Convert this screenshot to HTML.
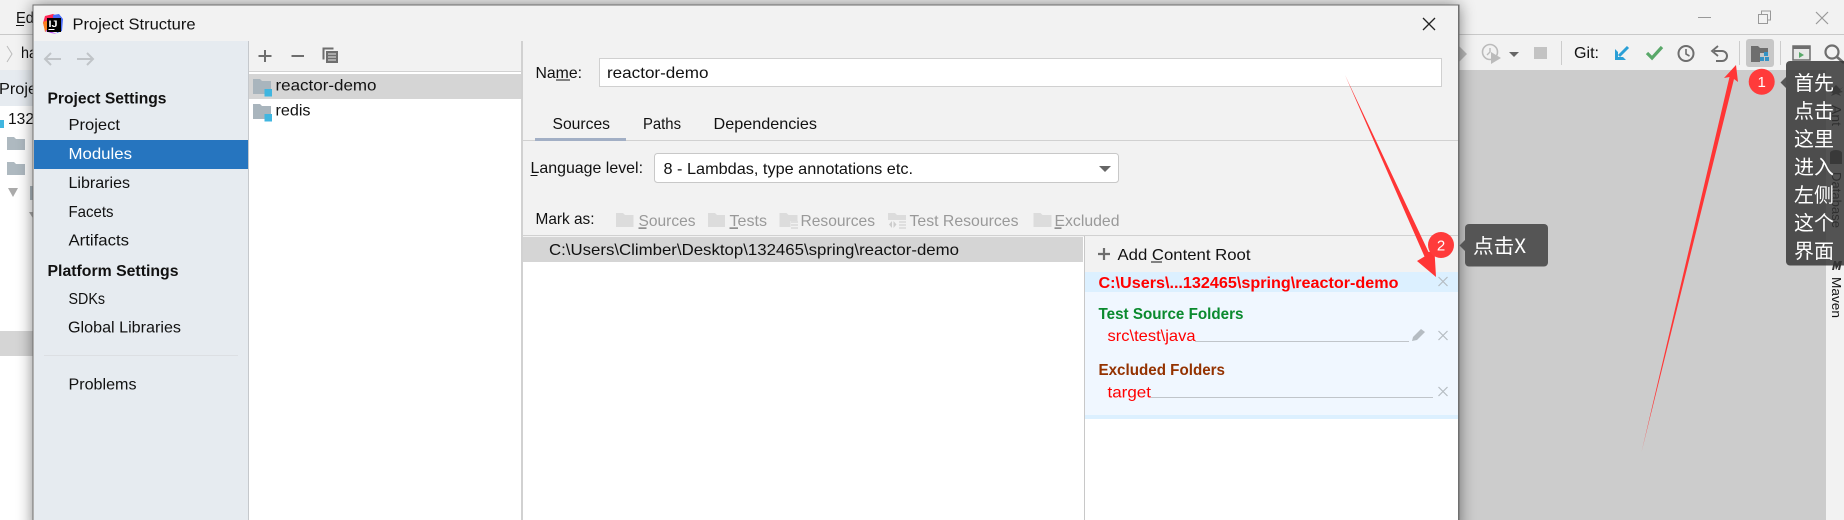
<!DOCTYPE html>
<html><head><meta charset="utf-8"><title>Project Structure</title>
<style>
html,body{margin:0;padding:0;width:1844px;height:520px;overflow:hidden;background:#ccc}
svg{display:block;position:absolute;left:0;top:0}
text{font-family:"Liberation Sans","Noto Sans CJK SC",sans-serif;font-size:16px;fill:#111}
.b{font-weight:bold;font-size:15.5px}
.g{fill:#999}
.r{fill:#f00}
.c{font-family:"Noto Sans CJK SC","Liberation Sans",sans-serif;font-size:20px;fill:#fff}
</style></head><body>
<svg width="1844" height="520" viewBox="0 0 1844 520" xmlns="http://www.w3.org/2000/svg">
<defs>
<filter id="s" x="-5%" y="-10%" width="110%" height="120%"><feGaussianBlur stdDeviation="8"/></filter>
</defs>
<!-- IDE background -->
<rect width="1844" height="520" fill="#ccc"/>
<rect width="1844" height="70" fill="#f2f2f2"/>
<rect y="34" width="1844" height="1" fill="#c9c9c9"/>
<rect x="1826" y="70" width="18" height="450" fill="#f2f2f2"/>
<rect x="0" y="70" width="34" height="36" fill="#e6ebf0"/>
<rect x="0" y="106" width="34" height="414" fill="#fff"/>
<rect x="0" y="331" width="34" height="25" fill="#d5d5d5"/>
<text x="16" y="23" textLength="18" lengthAdjust="spacingAndGlyphs">Ed</text>
<rect x="16" y="25" width="8" height="1" fill="#111"/>
<path d="M7 46l5 8-5 8" fill="none" stroke="#bbb"/>
<text x="21" y="58" textLength="16" lengthAdjust="spacingAndGlyphs">ha</text>
<text x="-1" y="94" textLength="38" lengthAdjust="spacingAndGlyphs">Proje</text>
<rect x="0" y="120" width="4" height="8" fill="#40b6e0"/>
<text x="8" y="124" textLength="26" lengthAdjust="spacingAndGlyphs">132</text>
<path d="M7 137h7l2 2h9v11H7z" fill="#aeb9c0"/>
<path d="M7 162h7l2 2h9v11H7z" fill="#aeb9c0"/>
<path d="M8 188h10l-5 9z" fill="#aaa"/>
<rect x="30" y="186" width="4" height="14" fill="#aeb9c0"/>
<path d="M29 212h5v8z" fill="#aaa"/>
<!-- IDE toolbar right -->
<path d="M1459 46l8 8-8 8z" fill="#bbb"/>
<circle cx="1490" cy="52" r="7.5" fill="none" stroke="#bbb" stroke-width="1.6"/>
<path d="M1490 48v4l-3 3" fill="none" stroke="#bbb" stroke-width="1.4"/>
<path d="M1491 52l10 6-10 6z" fill="#bbb"/>
<path d="M1509 52h10l-5 5z" fill="#666"/>
<rect x="1534" y="47" width="13" height="12" fill="#c3c3c3"/>
<rect x="1561" y="41" width="1" height="24" fill="#ccc"/>
<text x="1574" y="58" textLength="25" lengthAdjust="spacingAndGlyphs">Git:</text>
<path d="M1628 47l-9 9" stroke="#2a9fd6" stroke-width="3" fill="none"/>
<path d="M1615 49v11h11l-3-3h-5v-5z" fill="#2a9fd6"/>
<path d="M1647 53l5 5 10-11" fill="none" stroke="#59a869" stroke-width="3.2"/>
<circle cx="1686" cy="53.500" r="7.500" fill="none" stroke="#6e6e6e" stroke-width="2"/>
<path d="M1686 49v5l3.500 2" fill="none" stroke="#6e6e6e" stroke-width="1.600"/>
<path d="M1714 51h8a5 5 0 0 1 0 10h-6" fill="none" stroke="#6e6e6e" stroke-width="2"/>
<path d="M1718 46l-6 5 6 5" fill="none" stroke="#6e6e6e" stroke-width="1.800"/>
<rect x="1739" y="41" width="1" height="24" fill="#ccc"/>
<rect x="1746" y="39" width="28" height="28" rx="3" fill="#c7c7c7"/>
<path d="M1751 46h7l2 2h8v14h-17z" fill="#6e6e6e"/>
<rect x="1760" y="53" width="9" height="9" fill="#c7c7c7"/>
<path d="M1764 52h4v4h-4zM1760 57h4v4h-4zM1765 57h4v4h-4z" fill="#3592c4"/>
<rect x="1780" y="41" width="1" height="24" fill="#ccc"/>
<rect x="1793" y="46" width="17" height="14" fill="#e8e8e8" stroke="#6e6e6e" stroke-width="1.500"/>
<rect x="1793" y="46" width="17" height="3" fill="#6e6e6e"/>
<path d="M1799 52l5 3-5 3z" fill="#59a869"/>
<circle cx="1832" cy="52" r="6.500" fill="none" stroke="#6e6e6e" stroke-width="2.200"/>
<path d="M1837 57l7 6" stroke="#6e6e6e" stroke-width="2.600"/>
<!-- window controls -->
<rect x="1698" y="17" width="13" height="1" fill="#999"/>
<path d="M1758.500 14.500h9v9h-9zM1761.500 14v-3h9v9h-3" fill="none" stroke="#999"/>
<path d="M1816 12l12 12M1828 12l-12 12" stroke="#999" stroke-width="1.200"/>
<!-- right stripe labels -->
<path d="M1836 85l-4 4-3-2 3 3-3 2 4 1-2 3 5-2 5 2-2-3 4-1-3-2 3-3-3 2z" fill="#555"/>
<text transform="translate(1832,105) rotate(90)" textLength="21" lengthAdjust="spacingAndGlyphs" style="font-size:13px">Ant</text>
<ellipse cx="1836" cy="153" rx="6" ry="3" fill="#555"/><rect x="1830" y="153" width="12" height="11" fill="#555"/>
<text transform="translate(1832,172) rotate(90)" textLength="56" lengthAdjust="spacingAndGlyphs" style="font-size:13px">Database</text>
<path d="M1832 270l2-9h2l1 3 2-3h3l-2 9h-2l1-5-3 5-1-5-1 5z" fill="#333"/>
<text transform="translate(1832,277) rotate(90)" textLength="41" lengthAdjust="spacingAndGlyphs" style="font-size:13px">Maven</text>
<!-- dialog shadow -->
<rect x="33" y="5" width="1426" height="530" fill="#000" opacity=".5" filter="url(#s)"/>
<!-- dialog -->
<rect x="33" y="5" width="1426" height="520" fill="#f2f2f2" stroke="#6f6f6f" stroke-width="1"/>
<rect x="34" y="41" width="214" height="479" fill="#e6ebf0"/>
<rect x="248" y="41" width="1" height="479" fill="#c5c8cc"/>
<rect x="249" y="72" width="272" height="448" fill="#fff"/>
<rect x="249" y="71" width="272" height="1" fill="#d1d1d1"/>
<rect x="521" y="41" width="2" height="479" fill="#d1d1d1"/>
<!-- logo -->
<path d="M45 16l8-2 4 2-12 14-2-7z" fill="#fe2857"/>
<path d="M43 22l6-2v10l-4 2z" fill="#fc801d"/>
<path d="M53 15l6-1 4 5-1 12-5 2-4-16z" fill="#4a6cf7"/>
<path d="M45 31l6 2 6 1-10-4z" fill="#b74af7"/>
<rect x="47" y="18" width="14" height="14" fill="#000"/>
<text x="48.500" y="27" textLength="9" lengthAdjust="spacingAndGlyphs" style="font-size:9px;font-weight:bold;fill:#fff">IJ</text>
<rect x="48.500" y="29" width="6" height="1" fill="#fff"/>
<text x="72.500" y="29.500" textLength="123" lengthAdjust="spacingAndGlyphs">Project Structure</text>
<path d="M1423 18l12 12M1435 18l-12 12" stroke="#222" stroke-width="1.300"/>
<!-- sidebar -->
<path d="M61 59H45M51 53l-6 6 6 6" fill="none" stroke="#c0c4c8" stroke-width="2"/>
<path d="M77 59h16M87 53l6 6-6 6" fill="none" stroke="#c0c4c8" stroke-width="2"/>
<text class="b" x="47.500" y="103.500" textLength="119" lengthAdjust="spacingAndGlyphs">Project Settings</text>
<text x="68.500" y="130" textLength="51.500" lengthAdjust="spacingAndGlyphs">Project</text>
<rect x="34" y="140" width="214" height="29" fill="#2675bf"/>
<text x="68.500" y="159" textLength="63.500" lengthAdjust="spacingAndGlyphs" style="fill:#fff">Modules</text>
<text x="68.500" y="188" textLength="61.500" lengthAdjust="spacingAndGlyphs">Libraries</text>
<text x="68.500" y="217" textLength="45" lengthAdjust="spacingAndGlyphs">Facets</text>
<text x="68.500" y="245.500" textLength="60.500" lengthAdjust="spacingAndGlyphs">Artifacts</text>
<text class="b" x="47.500" y="276" textLength="131" lengthAdjust="spacingAndGlyphs">Platform Settings</text>
<text x="68.500" y="304" textLength="36.500" lengthAdjust="spacingAndGlyphs">SDKs</text>
<text x="68" y="332.500" textLength="113" lengthAdjust="spacingAndGlyphs">Global Libraries</text>
<rect x="44" y="355" width="194" height="1" fill="#dcdfe3"/>
<text x="68.500" y="389.500" textLength="68" lengthAdjust="spacingAndGlyphs">Problems</text>
<!-- module list -->
<path d="M258.500 56h13M265 50v12M291.500 56h12.500" stroke="#6e6e6e" stroke-width="2" fill="none"/>
<path d="M322.500 47.500h11v2h-9v10h-2z" fill="#6e6e6e"/>
<rect x="326" y="51" width="12" height="12" fill="#6e6e6e"/>
<path d="M328 54h8M328 57h8M328 60h8" stroke="#e8e8e8"/>
<rect x="249" y="74" width="272" height="25" fill="#d5d5d5"/>
<path d="M253 79h7l2 2h9v13h-18z" fill="#a9b5bd"/>
<rect x="264.500" y="89" width="7.500" height="7.500" fill="#40b6e0"/>
<text x="275.500" y="90.500" textLength="101" lengthAdjust="spacingAndGlyphs">reactor-demo</text>
<path d="M253 104h7l2 2h9v13h-18z" fill="#a9b5bd"/>
<rect x="264.500" y="114" width="7.500" height="7.500" fill="#40b6e0"/>
<text x="275.500" y="115.500" textLength="35" lengthAdjust="spacingAndGlyphs">redis</text>
<!-- name -->
<text x="535.500" y="78" textLength="46.500" lengthAdjust="spacingAndGlyphs">Name:</text>
<rect x="556" y="79.500" width="14" height="1" fill="#111"/>
<rect x="599.500" y="58.500" width="842" height="28" fill="#fff" stroke="#d0d0d0"/>
<text x="607" y="78" textLength="101.500" lengthAdjust="spacingAndGlyphs">reactor-demo</text>
<!-- tabs -->
<text x="552.500" y="129" textLength="57.500" lengthAdjust="spacingAndGlyphs">Sources</text>
<text x="643" y="129" textLength="38" lengthAdjust="spacingAndGlyphs">Paths</text>
<text x="713.500" y="129" textLength="103.500" lengthAdjust="spacingAndGlyphs">Dependencies</text>
<rect x="523" y="140" width="935" height="1" fill="#d1d1d1"/>
<rect x="535" y="138" width="91" height="3" fill="#a2afc5"/>
<!-- language level -->
<text x="530.500" y="173" textLength="112.500" lengthAdjust="spacingAndGlyphs">Language level:</text>
<rect x="530.500" y="175" width="7" height="1" fill="#111"/>
<rect x="654.500" y="153.500" width="464" height="29" rx="3" fill="#fff" stroke="#c8c8c8"/>
<text x="663.500" y="174" textLength="249.500" lengthAdjust="spacingAndGlyphs">8 - Lambdas, type annotations etc.</text>
<path d="M1099 166h12l-6 6z" fill="#666"/>
<!-- mark as -->
<text x="535.500" y="224" textLength="59" lengthAdjust="spacingAndGlyphs">Mark as:</text>
<path d="M616 213h7l2 2h8.500v12H616z" fill="#dcdcdc"/>
<text class="g" x="638.500" y="226" textLength="57" lengthAdjust="spacingAndGlyphs">Sources</text>
<rect x="638.500" y="227.500" width="8" height="1.200" fill="#666"/>
<path d="M708 213h7l2 2h8v12h-17z" fill="#dcdcdc"/>
<text class="g" x="729.500" y="226" textLength="37.500" lengthAdjust="spacingAndGlyphs">Tests</text>
<rect x="729.500" y="227.500" width="8.500" height="1.200" fill="#666"/>
<path d="M779.500 213h7l2 2h9v6h-7v6h-11z" fill="#dcdcdc"/>
<path d="M791 222h7M791 225h7M791 228h7" stroke="#ccc"/>
<text class="g" x="800.500" y="226" textLength="74.500" lengthAdjust="spacingAndGlyphs">Resources</text>
<path d="M888 213h7l2 2h9v5h-18z" fill="#dcdcdc"/>
<path d="M892 221l-3 3.500 3 3.500zM893.500 221l3 3.500-3 3.500z" fill="#ccc"/>
<path d="M899 222h7M899 225h7M899 228h7" stroke="#ccc"/>
<text class="g" x="909.500" y="226" textLength="109" lengthAdjust="spacingAndGlyphs">Test Resources</text>
<path d="M1033.500 213h7l2 2h9v12h-18z" fill="#dcdcdc"/>
<text class="g" x="1054.500" y="226" textLength="65" lengthAdjust="spacingAndGlyphs">Excluded</text>
<rect x="1054.500" y="227.500" width="7" height="1.200" fill="#666"/>
<rect x="523" y="235" width="935" height="1" fill="#d1d1d1"/>
<!-- content lists -->
<rect x="523" y="236" width="935" height="284" fill="#fff"/>
<rect x="523" y="236" width="935" height="1" fill="#f2f2f2"/>
<rect x="523" y="237" width="560" height="25" fill="#d5d5d5"/>
<text x="549" y="255" textLength="410" lengthAdjust="spacingAndGlyphs">C:\Users\Climber\Desktop\132465\spring\reactor-demo</text>
<rect x="1084" y="236" width="1" height="284" fill="#c8c8c8"/>
<rect x="1085" y="237" width="373" height="35" fill="#f2f2f2"/>
<path d="M1098 254h12M1104 248v12" stroke="#6e6e6e" stroke-width="2.200"/>
<text x="1117.500" y="260" textLength="133" lengthAdjust="spacingAndGlyphs">Add Content Root</text>
<rect x="1151" y="261.500" width="11" height="1" fill="#111"/>
<rect x="1085" y="272" width="373" height="20" fill="#dcf0ff"/>
<rect x="1085" y="292" width="373" height="123" fill="#f0f7ff"/>
<rect x="1085" y="415" width="373" height="4" fill="#dcf0ff"/>
<text class="b r" x="1098.500" y="288" textLength="300" lengthAdjust="spacingAndGlyphs">C:\Users\...132465\spring\reactor-demo</text>
<path d="M1438.500 277l9 9M1447.500 277l-9 9M1438.500 331l9 9M1447.500 331l-9 9M1438.500 387l9 9M1447.500 387l-9 9" stroke="#b5bcc2" stroke-width="1.200"/>
<text class="b" x="1098.500" y="319" textLength="145" lengthAdjust="spacingAndGlyphs" style="fill:#0a8a2e">Test Source Folders</text>
<text class="r" x="1107.500" y="341" textLength="88" lengthAdjust="spacingAndGlyphs">src\test\java</text>
<rect x="1195" y="341" width="214" height="1" fill="#c0c5ca"/>
<path d="M1412 341l1-4 8-8 4 3-8 8z" fill="#b5bcc2"/>
<text class="b" x="1098.500" y="375" textLength="126.500" lengthAdjust="spacingAndGlyphs" style="fill:#943200">Excluded Folders</text>
<text class="r" x="1107.500" y="397.500" textLength="43.500" lengthAdjust="spacingAndGlyphs">target</text>
<rect x="1151" y="397" width="282" height="1" fill="#c0c5ca"/>
<rect x="1458" y="5" width="1" height="515" fill="#6f6f6f"/>
<!-- annotation arrows -->
<path d="M1736 65L1724 78l5.500-1L1641.500 452 1734 79l4 3z" fill="#ff3535"/>
<path d="M1345 75l83.500 177 6-1 1.500 26-19-16 7.500-4.500z" fill="#ff3535"/>
<!-- badges -->
<circle cx="1761.700" cy="81.700" r="13" fill="#ff3b3b"/>
<text x="1761.700" y="87" text-anchor="middle" style="fill:#fff;font-size:15px">1</text>
<circle cx="1441" cy="245" r="13" fill="#ff3b3b"/>
<text x="1441" y="250.500" text-anchor="middle" style="fill:#fff;font-size:15px">2</text>
<!-- tooltips -->
<rect x="1786" y="61" width="70" height="204.500" rx="4" fill="#343434" fill-opacity=".84"/>
<path d="M1786 77l-5.500 5.500 5.500 5.500z" fill="#555"/>
<text class="c" x="1794" y="90">首先</text>
<text class="c" x="1794" y="118">点击</text>
<text class="c" x="1794" y="146">这里</text>
<text class="c" x="1794" y="174">进入</text>
<text class="c" x="1794" y="202">左侧</text>
<text class="c" x="1794" y="230">这个</text>
<text class="c" x="1794" y="258">界面</text>
<rect x="1465" y="224" width="83" height="42.500" rx="4" fill="#555"/>
<path d="M1465 240l-5.500 5.500 5.500 5.500z" fill="#555"/>
<text class="c" x="1473" y="253" textLength="53" lengthAdjust="spacingAndGlyphs">点击X</text>
</svg>
</body></html>
